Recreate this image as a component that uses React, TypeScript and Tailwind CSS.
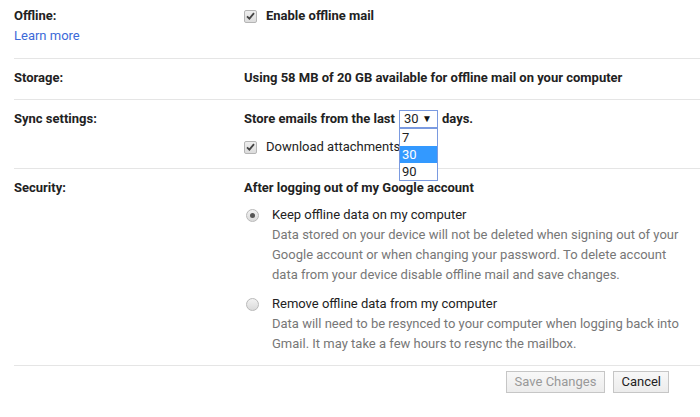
import React from 'react';

function Check() {
  return (
    <span className="w-[13px] h-[13px] rounded-[2px] border border-[#b5b5b5] bg-gradient-to-b from-[#eeeeee] to-[#dcdcdc] flex items-center justify-center flex-shrink-0">
      <svg width="9" height="8" viewBox="0 0 9 8">
        <path d="M1 4.3 L3.4 6.6 L8 1.2" fill="none" stroke="#444" strokeWidth="1.8" />
      </svg>
    </span>
  );
}

function Radio({ on }: { on?: boolean }) {
  return (
    <span className="w-[13px] h-[13px] rounded-full border border-[#b9b9b9] bg-gradient-to-b from-[#f2f2f2] to-[#dadada] flex items-center justify-center flex-shrink-0">
      {on && <span className="w-[5px] h-[5px] rounded-full bg-[#555]" />}
    </span>
  );
}

export default function App() {
  return (
    <div className="w-[700px] h-[417px] bg-white pl-[14px] text-[13px] leading-[20px] text-[#222] font-['Roboto','Liberation_Sans',sans-serif] overflow-hidden">
      {/* Offline */}
      <div className="flex pt-[6px] pb-[12px]">
        <div className="w-[230px] flex-shrink-0">
          <p className="font-bold">Offline:</p>
          <a className="text-[#3c6ad8]">Learn more</a>
        </div>
        <div className="flex items-center gap-[9px] h-[20px]">
          <Check />
          <span className="font-bold">Enable offline mail</span>
        </div>
      </div>

      {/* Storage */}
      <div className="flex border-t border-[#e5e5e5] pt-[9px] pb-[11px]">
        <div className="w-[230px] flex-shrink-0 font-bold">Storage:</div>
        <div className="font-bold">Using 58 MB of 20 GB available for offline mail on your computer</div>
      </div>

      {/* Sync */}
      <div className="flex border-t border-[#e5e5e5] pt-[9px] pb-[11px]">
        <div className="w-[230px] flex-shrink-0 font-bold">Sync settings:</div>
        <div>
          <div className="flex items-center font-bold h-[20px]">
            <span>Store emails from the last</span>
            <div className="relative ml-[4px] mr-[4px]">
              <div className="w-[39px] h-[18px] border border-[#7a9ae0] bg-white flex items-center justify-between pl-[4px] pr-[5px] font-normal">
                <span>30</span>
                <span className="text-[10px] leading-none text-[#111]">▼</span>
              </div>
              <div className="absolute left-0 top-[18px] w-[39px] border border-[#7a9ae0] bg-white font-normal z-10">
                <div className="h-[17px] leading-[17px] pl-[2px]">7</div>
                <div className="h-[17px] leading-[17px] pl-[2px] bg-[#3399ff] text-white">30</div>
                <div className="h-[17px] leading-[17px] pl-[2px]">90</div>
              </div>
            </div>
            <span>days.</span>
          </div>
          <div className="flex items-center gap-[9px] mt-[8px] h-[20px]">
            <Check />
            <span>Download attachments</span>
          </div>
        </div>
      </div>

      {/* Security */}
      <div className="flex border-t border-[#e5e5e5] pt-[9px] pb-[11px]">
        <div className="w-[230px] flex-shrink-0 font-bold">Security:</div>
        <div>
          <p className="font-bold">After logging out of my Google account</p>
          <div className="flex mt-[7px] pl-[2px]">
            <div className="h-[20px] flex items-center w-[26px] flex-shrink-0">
              <Radio on />
            </div>
            <div>
              <p>Keep offline data on my computer</p>
              <p className="text-[#777]">
                Data stored on your device will not be deleted when signing out of your
                <br />
                Google account or when changing your password. To delete account
                <br />
                data from your device disable offline mail and save changes.
              </p>
            </div>
          </div>
          <div className="flex mt-[9px] pl-[2px]">
            <div className="h-[20px] flex items-center w-[26px] flex-shrink-0">
              <Radio />
            </div>
            <div>
              <p>Remove offline data from my computer</p>
              <p className="text-[#777]">
                Data will need to be resynced to your computer when logging back into
                <br />
                Gmail. It may take a few hours to resync the mailbox.
              </p>
            </div>
          </div>
        </div>
      </div>

      {/* Buttons */}
      <div className="border-t border-[#e5e5e5] flex justify-end gap-[8px] pt-[5px] pr-[31px]">
        <button className="h-[22px] px-[8px] border border-[#c6c6c6] bg-gradient-to-b from-[#f8f8f8] to-[#ececec] text-[#999] leading-[20px]">
          Save Changes
        </button>
        <button className="h-[22px] px-[7px] border border-[#c6c6c6] bg-gradient-to-b from-[#f8f8f8] to-[#ececec] text-[#222] leading-[20px]">
          Cancel
        </button>
      </div>
    </div>
  );
}
